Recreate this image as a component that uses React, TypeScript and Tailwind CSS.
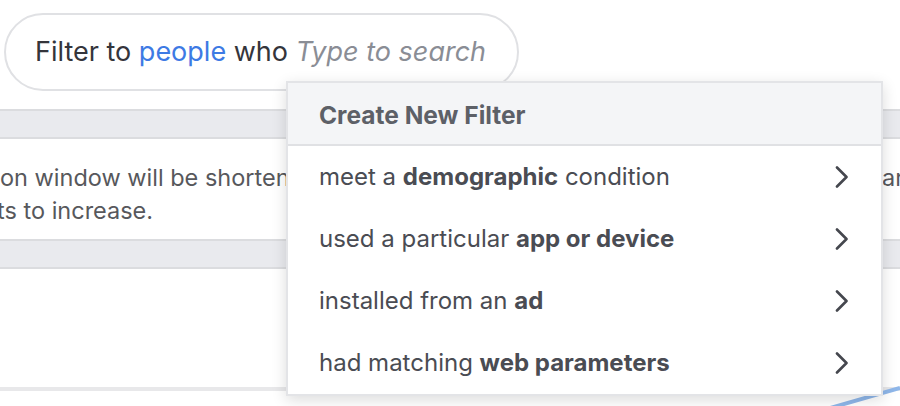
const items = [
  { pre: "meet a ", bold: "demographic", post: " condition" },
  { pre: "used a particular ", bold: "app or device", post: "" },
  { pre: "installed from an ", bold: "ad", post: "" },
  { pre: "had matching ", bold: "web parameters", post: "" },
];

function Chevron() {
  return (
    <svg width="14" height="22" viewBox="0 0 14 22" fill="none">
      <polyline points="2,1.5 11.5,11 2,20.5" stroke="#45474e" strokeWidth="2.6" strokeLinecap="round" strokeLinejoin="round" />
    </svg>
  );
}

export default function App() {
  return (
    <div className="relative w-[900px] h-[406px] overflow-hidden bg-white font-['Inter',sans-serif]">
      {/* Search pill */}
      <div className="pt-[13px] pl-[4px]">
        <div className="flex items-center w-[515px] h-[78px] rounded-full border-2 border-[#e0e1e4] pl-[29px] text-[27px] text-[#34353b]">
          <span>Filter to&nbsp;</span>
          <span className="text-[#3d7ae4]">people</span>
          <span>&nbsp;who&nbsp;</span>
          <span className="italic text-[#8a8d95]">Type to search</span>
        </div>
      </div>

      {/* Background panel */}
      <div className="mt-[18px]">
        <div className="h-[30px] bg-[#e9eaee] border-y-2 border-[#dbdcdf]" />
        <div className="h-[100px] pt-[22px] text-[23.5px] leading-[33px] text-[#57585c] overflow-hidden">
          <div className="flex justify-between">
            <span>on window will be shorten</span>
            <span className="mr-[-4px]">ar</span>
          </div>
          <div className="-ml-[3px]">ts to increase.</div>
        </div>
        <div className="h-[30px] bg-[#e9eaee] border-y-2 border-[#dbdcdf]" />
        <div className="h-[118px]" />
        <div className="h-[4px] bg-[#e8e8ea]" />
      </div>

      {/* Chart line peeking bottom right */}
      <svg className="absolute right-0 bottom-0" width="70" height="20" viewBox="0 0 70 20">
        <path d="M0 22 L70 2" stroke="#8fb7ea" strokeWidth="4" fill="none" />
      </svg>

      {/* Dropdown */}
      <div className="absolute left-[286px] top-[81px] w-[597px] bg-white border-2 border-[#e3e4e7] shadow-[0_4px_14px_rgba(0,0,0,0.14)]">
        <div className="h-[63px] flex items-center pt-[3px] pl-[31px] bg-[#f4f5f7] border-b-2 border-[#e0e1e4] text-[24.5px] font-bold text-[#5d6067]">
          Create New Filter
        </div>
        <div>
          {items.map((it) => (
            <div key={it.bold} className="h-[62px] flex items-center justify-between pl-[31px] pr-[32px] text-[24px] text-[#4a4c53]">
              <span>
                {it.pre}
                <b className="font-bold">{it.bold}</b>
                {it.post}
              </span>
              <Chevron />
            </div>
          ))}
        </div>
      </div>
    </div>
  );
}
